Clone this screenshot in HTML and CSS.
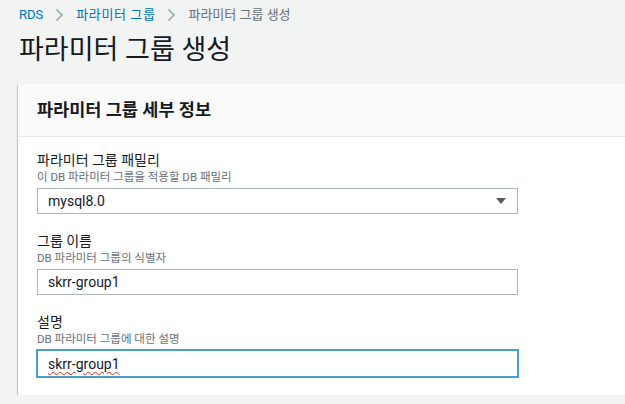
FILE: index.html
```html
<!DOCTYPE html>
<html lang="ko">
<head>
<meta charset="utf-8">
<title>파라미터 그룹 생성</title>
<link rel="stylesheet" href="styles.css">
</head>
<body>
<div class="page">
  <nav class="breadcrumb">
    <a class="crumb-link" href="#">RDS</a>
    <svg class="chev" width="9" height="14" viewBox="0 0 9 14"><polyline points="1.5,1.5 7,7 1.5,12.5" fill="none" stroke="#aab7b8" stroke-width="2"/></svg>
    <a class="crumb-link crumb-mid" href="#">파라미터 그룹</a>
    <svg class="chev" width="9" height="14" viewBox="0 0 9 14"><polyline points="1.5,1.5 7,7 1.5,12.5" fill="none" stroke="#aab7b8" stroke-width="2"/></svg>
    <span class="crumb-current">파라미터 그룹 생성</span>
  </nav>
  <h1 class="title">파라미터 그룹 생성</h1>
  <section class="card">
    <header class="card-header">파라미터 그룹 세부 정보</header>
    <div class="card-body">
      <div class="field">
        <div class="label">파라미터 그룹 패밀리</div>
        <div class="desc">이 DB 파라미터 그룹을 적용할 DB 패밀리</div>
        <div class="select">
          <span>mysql8.0</span>
          <svg class="caret" width="10" height="6" viewBox="0 0 10 6"><polygon points="0,0 10,0 5,6" fill="#545b64"/></svg>
        </div>
      </div>
      <div class="field">
        <div class="label">그룹 이름</div>
        <div class="desc">DB 파라미터 그룹의 식별자</div>
        <div class="input"><span>skrr-group1</span></div>
      </div>
      <div class="field">
        <div class="label">설명</div>
        <div class="desc">DB 파라미터 그룹에 대한 설명</div>
        <div class="input focused"><span class="spell">skrr-group1</span></div>
      </div>
    </div>
  </section>
</div>
</body>
</html>
```
FILE: styles.css
```css
html, body {
  margin: 0;
  padding: 0;
  background: #f2f3f3;
  overflow: hidden;
}
body {
  font-family: Roboto, "Noto Sans CJK KR", sans-serif;
  color: #16191f;
}
.page {
  padding: 6px 0 0 18px;
}
.breadcrumb {
  display: flex;
  align-items: center;
  height: 18px;
  padding-left: 1px;
  font-size: 13px;
  line-height: 18px;
}
.crumb-link {
  color: #0073bb;
  text-decoration: none;
}
.crumb-mid {
  letter-spacing: 0.6px;
}
.chev {
  margin: 0 12px 0 12px;
}
.crumb-current {
  color: #687078;
}
.title {
  margin: 10px 0 18px 1px;
  font-size: 27px;
  line-height: 32px;
  font-weight: 400;
}
.card {
  margin-right: -40px;
  background: #fff;
  box-shadow: 0 1px 1px 0 rgba(0, 28, 36, 0.3), 1px 1px 1px 0 rgba(0, 28, 36, 0.15), -1px 1px 1px 0 rgba(0, 28, 36, 0.15);
}
.card-header {
  background: #fafafa;
  border-bottom: 1px solid #eaeded;
  padding: 16px 19px 15px;
  font-size: 17.5px;
  line-height: 21px;
  font-weight: 700;
}
.card-body {
  padding: 14px 19px 18px;
  display: flex;
  flex-direction: column;
  gap: 18px;
}
.field {
  display: flex;
  flex-direction: column;
  width: 481px;
}
.label {
  font-size: 14px;
  line-height: 18px;
}
.desc {
  font-size: 11.5px;
  line-height: 16px;
  color: #687078;
  margin-bottom: 3px;
}
.select, .input {
  box-sizing: border-box;
  height: 26px;
  border: 1px solid #aab7b8;
  background: #fff;
  display: flex;
  align-items: center;
  justify-content: space-between;
  padding: 0 10px;
  font-size: 14px;
}
.caret {
  margin-right: 1px;
}
.focused {
  height: 27px;
  border-color: #45a2cf;
  box-shadow: 0 0 0 1px #45a2cf;
}
.spell {
  text-decoration: underline wavy #e0201a;
  text-decoration-thickness: 1px;
  text-underline-offset: 2px;
}
```
